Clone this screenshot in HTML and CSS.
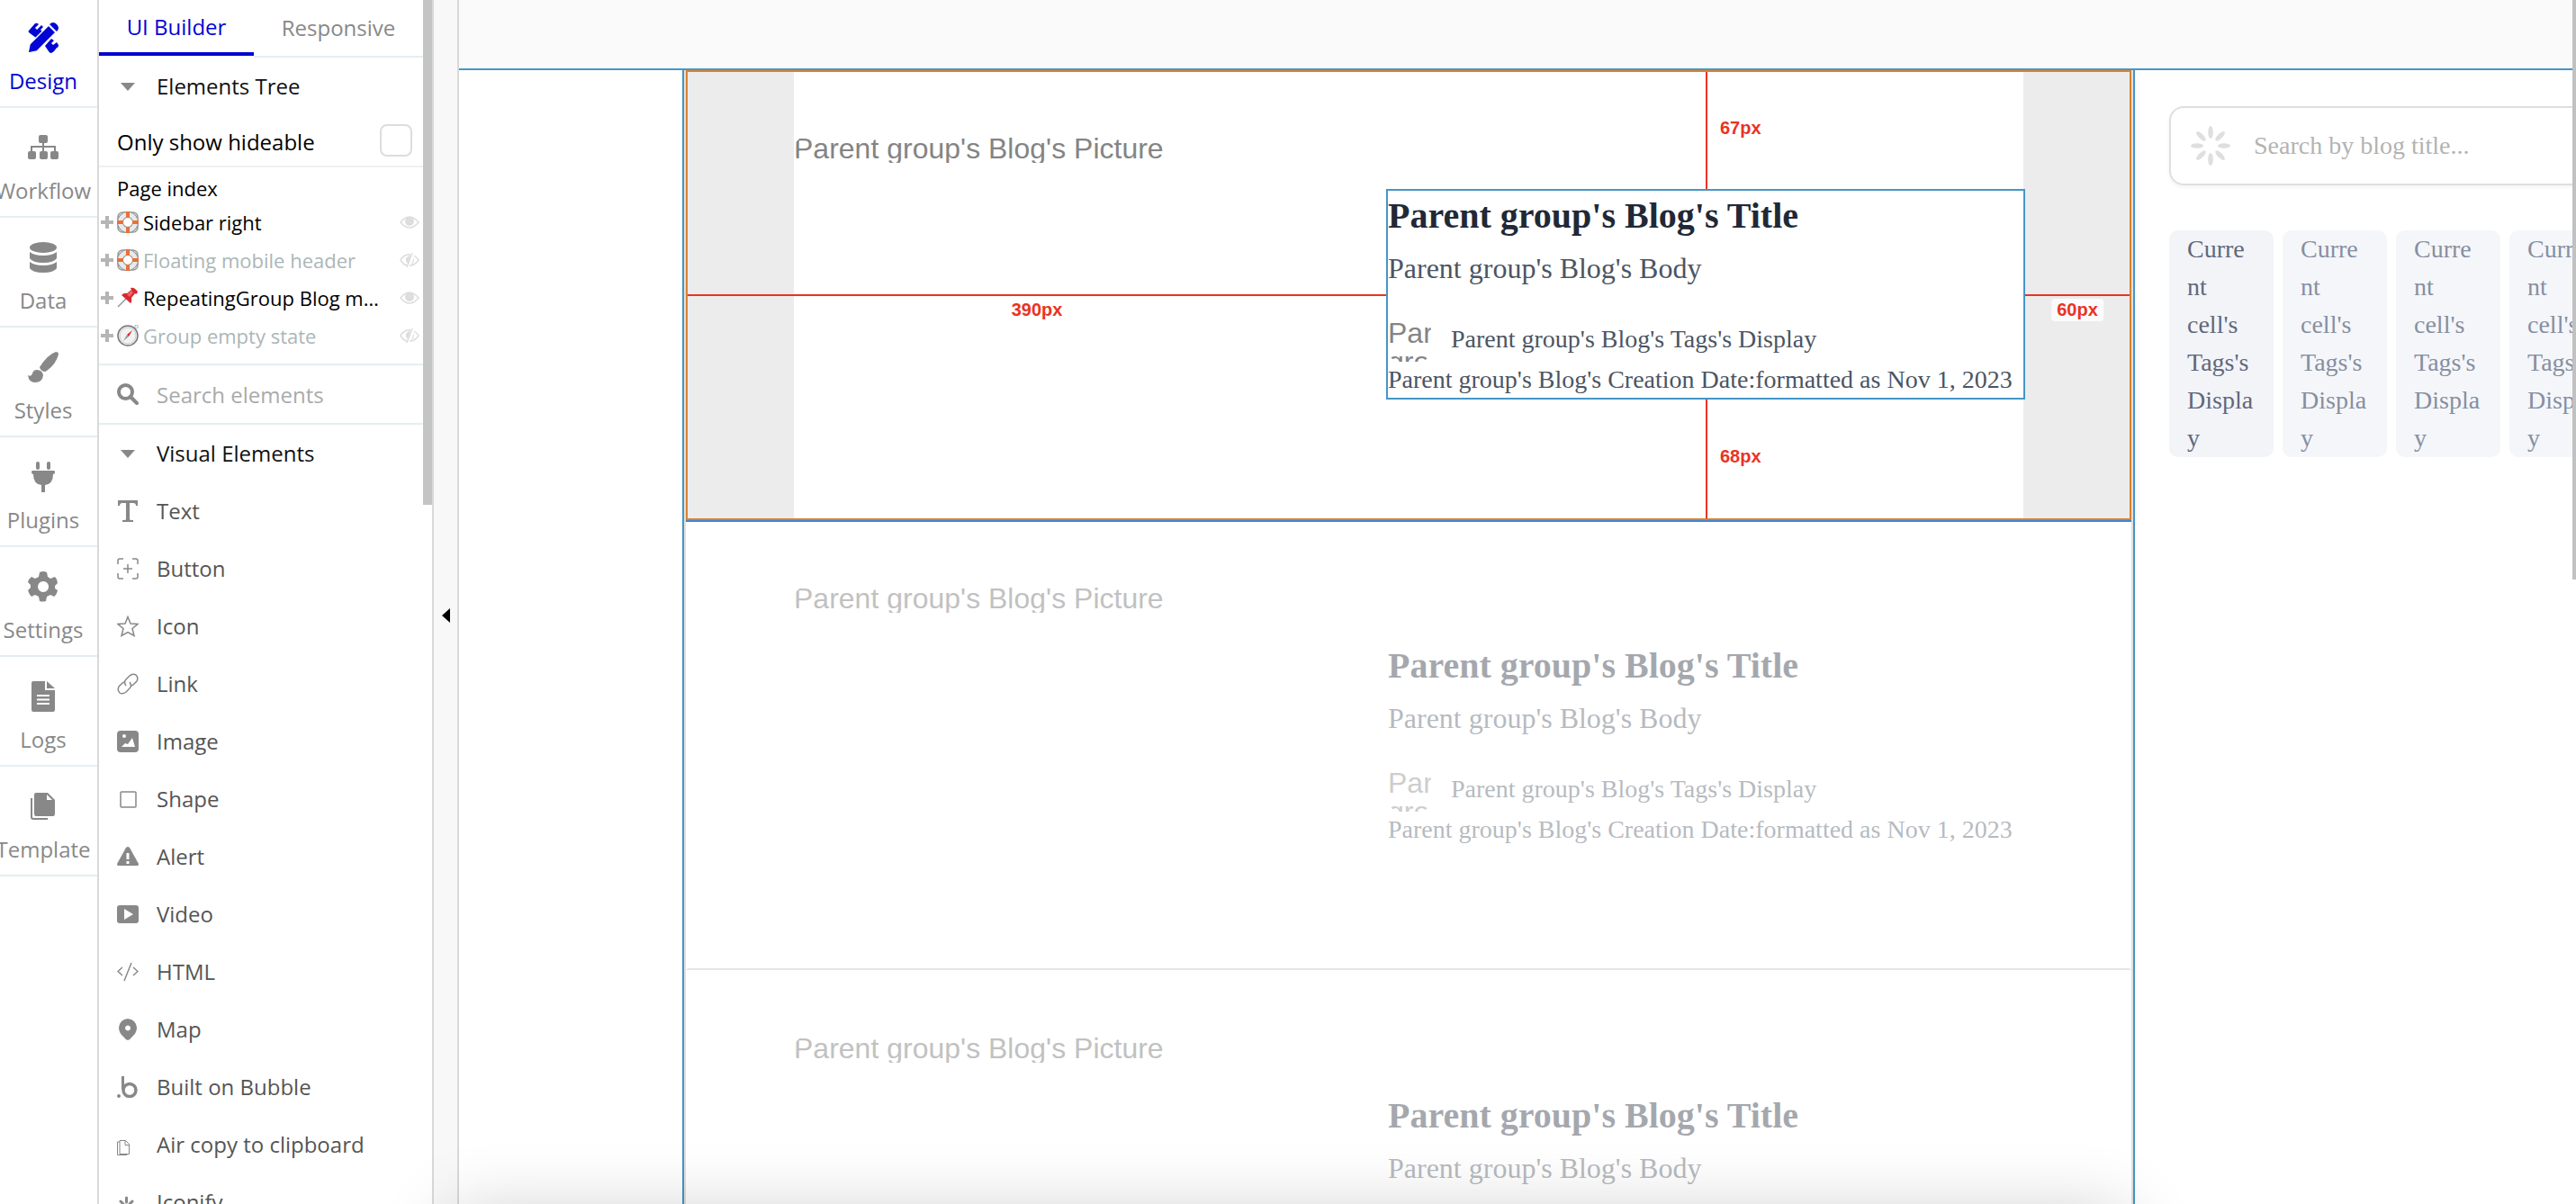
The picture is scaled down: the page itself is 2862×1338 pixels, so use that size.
FILE: index.html
```html
<!DOCTYPE html>
<html lang="en">
<head>
  <meta charset="UTF-8">
  <meta name="viewport" content="width=device-width, initial-scale=1.0">
  <link rel="stylesheet" href="styles.css">
  <title>UI Builder</title>
</head>
<body>
  <svg class="defs" aria-hidden="true">
    <symbol id="plus" viewBox="0 0 14 14"><path d="M5 0h4v5h5v4H9v5H5V9H0V5h5z"/></symbol>
    <symbol id="eye" viewBox="0 0 22 14">
      <path d="M1 7Q11-5 21 7Q11 19 1 7z" fill="none" stroke="currentColor" stroke-width="1.5"/>
      <circle cx="11" cy="6" r="5"/>
    </symbol>
    <symbol id="eye-off" viewBox="0 0 22 16">
      <path d="M12 2Q5 1 1 8q3 5 7 6M16 3q3 2 5 5q-4 6-10 6M14 0L8 16" fill="none" stroke="currentColor" stroke-width="1.5"/>
      <path d="M12 3Q6 4 7 9l2 3zM16 5l-3 8q4-3 3-8z"/>
    </symbol>
    <symbol id="buoy" viewBox="0 0 24 24">
      <rect x="1" y="1" width="22" height="22" rx="5" fill="none" stroke="#999" stroke-width="1.5"/>
      <circle cx="12" cy="12" r="8.5" fill="none" stroke="#8d8d8d" stroke-width="7"/>
      <circle cx="12" cy="12" r="8.5" fill="none" stroke="#e6eaea" stroke-width="5"/>
      <path d="M10 0h4v7h-4zM10 17h4v7h-4zM0 10h7v4H0zM17 10h7v4h-7z" fill="#e8703a"/>
    </symbol>
    <symbol id="pin" viewBox="0 0 24 24">
      <path d="M1 22L10 13" stroke="#8496a5" stroke-width="1.5"/>
      <path d="M15 1q3-1 5 1q3 2 3 4l-2 2-1-1-4 5q1 4-1 6L5 9q3-3 6-2l5-4z" fill="#d8282f"/>
      <path d="M11 8l5-4 2 2-4 5z" fill="#f0646a"/>
    </symbol>
    <symbol id="compass" viewBox="0 0 24 24">
      <circle cx="21.500" cy="2" r="1.800" fill="none" stroke="#aaa"/>
      <circle cx="12" cy="12" r="11" fill="#f1f2f2" stroke="#777" stroke-width="1.5"/>
      <circle cx="12" cy="12" r="9" fill="none" stroke="#ccc"/>
      <path d="M17 6l-4 7-2-2z" fill="#e01f26"/>
      <path d="M7 18l4-7 2 2z" fill="#999"/>
    </symbol>
  </svg>

  <nav class="rail">
    <ul class="rail-list">
      <li><a class="rail-item active" href="#design">
        <svg class="rail-icon" viewBox="0 0 34 34">
          <path d="M1 9L8 1q2-1 4 1L8 6l2 2 5-5 2 2-3 3 2 2-7 7L1 11q-1-1 0-2z"/>
          <path d="M19 26l7-8 3 2-3 3 2 2 4-3 2 3q0 3-2 3l-3 4-3 2q-2 0-3-2z"/>
          <path d="M0 34l2-10L23 3l8 8L10 32z" stroke="#fff" stroke-width="1.5"/>
          <path d="M24 2q4-4 8 0 4 4 0 8z"/>
        </svg>
        Design</a></li>
      <li><a class="rail-item" href="#workflow">
        <svg class="rail-icon" viewBox="0 0 34 34">
          <rect x="12" y="3" width="10" height="9" rx="2"/>
          <path d="M17 11v10M4 21v-5h26v5" fill="none" stroke="currentColor" stroke-width="2"/>
          <rect x="0" y="21" width="9" height="9" rx="2"/><rect x="13" y="21" width="9" height="9" rx="2"/><rect x="25" y="21" width="9" height="9" rx="2"/>
        </svg>
        Workflow</a></li>
      <li><a class="rail-item" href="#data">
        <svg class="rail-icon" viewBox="0 0 34 34">
          <ellipse cx="17" cy="6" rx="15" ry="6"/>
          <path d="M2 11q5 4 15 4t15-4v7q-3 5-15 5T2 18zM2 22q5 4 15 4t15-4v7q-3 5-15 5T2 29z"/>
        </svg>
        Data</a></li>
      <li><a class="rail-item" href="#styles">
        <svg class="rail-icon" viewBox="0 0 34 34">
          <path d="M13 17Q22 3 31 0q3 0 3 3-3 11-13 18-1 1-3 1-4-1-5-5z"/>
          <path d="M10 20q6 0 7 6-1 8-9 8-7 0-8-8 4 2 5-2 1-4 5-4z"/>
        </svg>
        Styles</a></li>
      <li><a class="rail-item" href="#plugins">
        <svg class="rail-icon" viewBox="0 0 34 34">
          <rect x="9" y="0" width="4" height="9" rx="2"/><rect x="21" y="0" width="4" height="9" rx="2"/>
          <path d="M5 10h24q1 0 1 2t-2 2q0 11-9 12v8h-4v-8Q6 25 6 14q-2 0-2-2t1-2z"/>
        </svg>
        Plugins</a></li>
      <li><a class="rail-item" href="#settings">
        <svg class="rail-icon" viewBox="0 0 34 34">
          <path fill-rule="evenodd" d="M13 1q4-2 8 0l1 5 3 2 5-2q3 3 3 7l-3 3v3l3 2q-1 5-4 7l-4-2-4 2-1 5q-4 1-7 0l-1-5-4-2-4 2q-3-3-4-7l3-3v-3l-3-3q1-4 4-6l4 2 4-2zM17 11a6 6 0 1 0 .1 0z"/>
        </svg>
        Settings</a></li>
      <li><a class="rail-item" href="#logs">
        <svg class="rail-icon" viewBox="0 0 34 34">
          <path d="M6 0h13v10h11v22q0 2-2 2H6q-2 0-2-2V2q0-2 2-2zM21 0l9 8h-9z"/>
          <path d="M10 16h14M10 20.500h14M10 25h14" stroke="#fff" stroke-width="2"/>
        </svg>
        Logs</a></li>
      <li><a class="rail-item" href="#template">
        <svg class="rail-icon" viewBox="0 0 34 34">
          <path d="M9 2h13l8 8v15q0 3-2 3H9q-2 0-2-3V4q0-2 2-2z"/>
          <path d="M21 4v6h6z" fill="#fff"/>
          <path d="M4 8v21q0 2 2 2h16" fill="none" stroke="currentColor" stroke-width="2"/>
        </svg>
        Template</a></li>
    </ul>
  </nav>

  <aside class="panel">
    <div class="tabs">
      <button class="tab active">UI Builder</button>
      <button class="tab">Responsive</button>
    </div>

    <button class="row heading"><span class="caret"></span>Elements Tree</button>
    <div class="hideable">
      <label for="hideable">Only show hideable</label>
      <input class="checkbox" type="checkbox" id="hideable">
    </div>

    <div class="tree">
      <p class="tree-page">Page index</p>
      <ul>
        <li class="tree-item"><svg class="plus"><use href="#plus"/></svg><svg class="emoji"><use href="#buoy"/></svg><span class="tree-name">Sidebar right</span><svg class="eye"><use href="#eye"/></svg></li>
        <li class="tree-item hidden"><svg class="plus"><use href="#plus"/></svg><svg class="emoji"><use href="#buoy"/></svg><span class="tree-name">Floating mobile header</span><svg class="eye"><use href="#eye-off"/></svg></li>
        <li class="tree-item"><svg class="plus"><use href="#plus"/></svg><svg class="emoji"><use href="#pin"/></svg><span class="tree-name">RepeatingGroup Blog main</span><svg class="eye"><use href="#eye"/></svg></li>
        <li class="tree-item hidden"><svg class="plus"><use href="#plus"/></svg><svg class="emoji"><use href="#compass"/></svg><span class="tree-name">Group empty state</span><svg class="eye"><use href="#eye-off"/></svg></li>
      </ul>
    </div>

    <div class="search">
      <svg class="icon" viewBox="0 0 24 24"><circle cx="9.500" cy="9.500" r="7.500" fill="none" stroke="currentColor" stroke-width="4"/><path d="M15 15l7 7" stroke="currentColor" stroke-width="4" stroke-linecap="round"/></svg>
      <input class="search-input" type="text" placeholder="Search elements" aria-label="Search elements">
    </div>

    <button class="row heading"><span class="caret"></span>Visual Elements</button>
    <button class="row"><svg class="icon" viewBox="0 0 24 24"><path d="M1 0h22v6h-2q0-3-3-3h-4v18q0 1 2 1h2v2H6v-2h2q2 0 2-1V3H6Q3 3 3 6H1z"/></svg>Text</button>
    <button class="row"><svg class="icon line" viewBox="0 0 24 24"><path d="M1 7V3q0-2 2-2h4M17 1h4q2 0 2 2v4M23 17v4q0 2-2 2h-4M7 23H3q-2 0-2-2v-4M12 7v10M7 12h10"/></svg>Button</button>
    <button class="row"><svg class="icon line" viewBox="0 0 24 24"><path d="M12 1.500l3 7.500 8 .5-6 5 2 8-7-4-7 4 2-8-6-5 8-.5z"/></svg>Icon</button>
    <button class="row"><svg class="icon line" viewBox="0 0 24 24"><path d="M10 14q-3-4 0-7l4-4q3-3 7-1 3 3 1 7l-4 4q-1 1-3 1M14 10q3 4 0 7l-4 4q-4 3-7 1-3-3-1-7l4-4q1-1 3-1"/></svg>Link</button>
    <button class="row"><svg class="icon" viewBox="0 0 24 24"><rect width="24" height="24" rx="4"/><circle cx="8" cy="6" r="2" fill="#fff"/><path d="M5 18l4-4 3 1 5-7 3 10z" fill="#fff"/></svg>Image</button>
    <button class="row"><svg class="icon line" viewBox="0 0 24 24"><rect x="4" y="4" width="17" height="17" rx="1"/></svg>Shape</button>
    <button class="row"><svg class="icon" viewBox="0 0 24 24"><path d="M12 1q1 0 2 1l10 18q0 2-1 2H1q-1 0-1-2L10 2q1-1 2-1z"/><path d="M12 8v7M12 17v3" stroke="#fff" stroke-width="3"/></svg>Alert</button>
    <button class="row"><svg class="icon" viewBox="0 0 24 24"><rect y="2" width="24" height="20" rx="3"/><path d="M8 6l10 6-10 6z" fill="#fff"/></svg>Video</button>
    <button class="row"><svg class="icon line" viewBox="0 0 24 24"><path d="M6 7l-5 4.500 5 4.500M18 7l5 4.500-5 4.500M16 2L8 22"/></svg>HTML</button>
    <button class="row"><svg class="icon" viewBox="0 0 24 24"><path fill-rule="evenodd" d="M12 0q9 1 10 10 0 6-6 11-2 3-4 3t-4-3Q2 16 2 10 3 1 12 0zM12 7.500a3 3 0 1 0 .1 0z"/></svg>Map</button>
    <button class="row"><svg class="icon" viewBox="0 0 24 24"><circle cx="14" cy="15.500" r="7" fill="none" stroke="currentColor" stroke-width="3.500"/><path d="M6.500 0v15" stroke="currentColor" stroke-width="3"/><circle cx="2" cy="22" r="2"/></svg>Built on Bubble</button>
    <button class="row"><svg class="icon thin" viewBox="0 0 24 24"><path d="M3 7.500h6.500l4 4v11H3zM9 7.500v5h4.500M3 9H.5v14.500H11v-1"/></svg>Air copy to clipboard</button>
    <button class="row"><svg class="icon" viewBox="0 0 24 24"><path d="M10.500 7v5M4 11l3 3M17 11l-3 3M3 18h4M14 18h4" stroke="currentColor" stroke-width="3" stroke-linecap="round"/></svg>Iconify</button>
    <span class="panel-scroll"></span>
  </aside>

  <button class="gutter" aria-label="Collapse panel"><span class="gutter-arrow"></span></button>

  <main class="canvas">
    <div class="page">
      <div class="page-main">
        <article class="card selected">
          <div class="stripe"></div>
          <div class="picture">Parent group's Blog's Picture</div>
          <div class="info">
            <h2>Parent group's Blog's Title</h2>
            <p class="body">Parent group's Blog's Body</p>
            <div class="meta"><span class="avatar">Par group's</span><span>Parent group's Blog's Tags's Display</span></div>
            <p class="date">Parent group's Blog's Creation Date:formatted as Nov 1, 2023</p>
          </div>
          <div class="stripe"></div>
          <div class="guide guide-left"><span class="size">390px</span></div>
          <div class="guide guide-right"><span class="size">60px</span></div>
          <div class="guide guide-top"><span class="size">67px</span></div>
          <div class="guide guide-bottom"><span class="size">68px</span></div>
        </article>
        <article class="card">
          <div class="stripe"></div>
          <div class="picture">Parent group's Blog's Picture</div>
          <div class="info">
            <h2>Parent group's Blog's Title</h2>
            <p class="body">Parent group's Blog's Body</p>
            <div class="meta"><span class="avatar">Par group's</span><span>Parent group's Blog's Tags's Display</span></div>
            <p class="date">Parent group's Blog's Creation Date:formatted as Nov 1, 2023</p>
          </div>
          <div class="stripe"></div>
        </article>
        <article class="card">
          <div class="stripe"></div>
          <div class="picture">Parent group's Blog's Picture</div>
          <div class="info">
            <h2>Parent group's Blog's Title</h2>
            <p class="body">Parent group's Blog's Body</p>
          </div>
          <div class="stripe"></div>
        </article>
      </div>

      <div class="page-side">
        <div class="blog-search">
          <svg class="spinner" viewBox="0 0 44 44">
            <g id="petals"><ellipse cx="22" cy="7" rx="2.800" ry="7"/><ellipse cx="22" cy="37" rx="2.800" ry="7"/><ellipse cx="7" cy="22" rx="7" ry="2.800"/><ellipse cx="37" cy="22" rx="7" ry="2.800"/></g>
            <use href="#petals" transform="rotate(45 22 22)"/>
          </svg>
          <input class="blog-input" type="text" placeholder="Search by blog title..." aria-label="Search by blog title">
        </div>
        <ul class="tags">
          <li class="tag first">Current cell's Tags's Display</li>
          <li class="tag">Current cell's Tags's Display</li>
          <li class="tag">Current cell's Tags's Display</li>
          <li class="tag">Current cell's Tags's Display</li>
        </ul>
      </div>
    </div>
    <span class="canvas-scroll"></span>
  </main>
  <div class="bottom-shadow"></div>
</body>
</html>
```

FILE: styles.css
```css
*, *::before, *::after {
  margin: 0;
  padding: 0;
  box-sizing: border-box;
}

body {
  display: flex;
  position: relative;
  height: 100vh;
  overflow: hidden;
  background: #fff;
  font-family: "Open Sans", sans-serif;
  font-size: 24px;
  line-height: 34px;
}

button, input {
  border: 0;
  background: none;
  font: inherit;
}

ul {
  list-style: none;
}

svg {
  flex: none;
  fill: currentColor;
}

.defs {
  position: absolute;
  width: 0;
  height: 0;
}

/* left rail */

.rail {
  flex: none;
  width: 110px;
  border-right: 2px solid #d9d9d9;
  overflow: hidden;
}

.rail-list {
  width: 120px;
  margin: -2px 0 0 -12px;
}

.rail-item {
  display: flex;
  flex-direction: column;
  align-items: center;
  gap: 14px;
  height: 122px;
  padding-top: 27px;
  border-bottom: 2px solid #e4eff1;
  color: #888;
  text-decoration: none;
}

.rail-item.active {
  color: #0205d3;
}

.rail-icon {
  width: 34px;
  height: 34px;
}

/* panel */

.panel {
  position: relative;
  flex: none;
  display: flex;
  flex-direction: column;
  width: 372px;
  padding-right: 10px;
  border-right: 2px solid #d9d9d9;
  overflow: hidden;
}

.panel > * {
  flex: none;
}

.tabs {
  display: flex;
  align-items: flex-start;
  height: 64px;
}

.tab {
  flex: 1;
  height: 64px;
  border-bottom: 2px solid #e4eff1;
  color: #888;
}

.tab.active {
  flex: none;
  width: 172px;
  height: 62px;
  padding-top: 2px;
  border-bottom: 4px solid #0205d3;
  color: #0205d3;
}

.row {
  display: flex;
  align-items: center;
  gap: 20px;
  height: 64px;
  padding-left: 20px;
  color: #555;
  text-align: left;
}

.heading {
  color: #111;
}

.icon {
  width: 24px;
  height: 24px;
  color: #888;
}

.line, .thin {
  fill: none;
  stroke: currentColor;
  stroke-width: 1.5;
}

.thin {
  stroke-width: 1;
}

.caret {
  margin: 0 4px;
  border: 8px solid transparent;
  border-top: 9px solid #888;
  border-bottom: 0;
}

.hideable {
  display: flex;
  align-items: center;
  justify-content: space-between;
  height: 58px;
  padding: 0 12px 0 20px;
  border-bottom: 2px solid #f0f0f0;
  color: #000;
}

.hideable label {
  padding-top: 4px;
}

.checkbox {
  appearance: none;
  width: 36px;
  height: 36px;
  border: 2px solid #ddd;
  border-radius: 8px;
}

.tree {
  padding: 6px 0 10px;
  border-bottom: 2px solid #e4eff1;
  font-size: 22px;
}

.tree-page {
  padding-left: 20px;
}

.tree-item {
  display: flex;
  align-items: center;
  height: 42px;
  padding: 0 4px 0 2px;
}

.tree-item.hidden .tree-name {
  color: #abb6b8;
}

.tree-name {
  flex: 1;
  margin: 0 22px 0 5px;
  overflow: hidden;
  text-overflow: ellipsis;
  white-space: nowrap;
}

.plus {
  width: 14px;
  height: 14px;
  margin-right: 4px;
  color: #b5b5b5;
}

.emoji {
  width: 24px;
  height: 24px;
}

.eye {
  width: 22px;
  height: 16px;
  color: #ddd;
}

.search {
  display: flex;
  align-items: center;
  gap: 20px;
  height: 66px;
  padding-left: 20px;
  border-bottom: 2px solid #e4eff1;
}

.search-input {
  flex: 1;
  min-width: 0;
  height: 64px;
}

.search-input::placeholder {
  color: #aaa;
}

.panel-scroll {
  position: absolute;
  top: 0;
  right: 0;
  width: 10px;
  height: 561px;
  background: #c4c4c4;
}

.gutter {
  flex: none;
  display: flex;
  align-items: center;
  width: 28px;
  padding: 30px 0 0 9px;
  border-right: 2px solid #d9d9d9;
  background: #f8f8f8;
}

.gutter-arrow {
  border: 8px solid transparent;
  border-right: 9px solid #000;
  border-left: 0;
}

/* canvas */

.canvas {
  position: relative;
  flex: 1;
  min-width: 0;
  padding: 76px 4px 0 0;
  background: linear-gradient(#fafafa 76px, #fff 76px);
  overflow: hidden;
}

.page {
  display: grid;
  grid-template-columns: 1fr 486px;
  padding-left: 248px;
  border-top: 2px solid #4596c6;
  font-family: "Liberation Serif", serif;
  font-size: 28px;
  line-height: 42px;
  color: #4b5563;
}

.page-main {
  border: solid #4596c6;
  border-width: 0 2px;
  box-shadow: inset 2px 0 #dfdfdf, inset -2px 0 #dfdfdf;
  padding: 0 2px;
}

.card {
  position: relative;
  display: grid;
  grid-template-columns: 118px 1fr 706px 118px;
  height: 500px;
  border: 2px solid transparent;
  border-bottom-color: #e5e5e5;
}

.card.selected {
  border-color: #d9822f;
  box-shadow: 0 2px #3b86d8;
}

.selected .stripe {
  background: #ececec;
}

.picture {
  justify-self: start;
  height: 29px;
  margin-top: 72px;
  border-radius: 14px;
  color: #848484;
  font-family: "Liberation Sans", sans-serif;
  font-size: 32px;
  line-height: 26px;
  overflow: hidden;
}

.info {
  position: relative;
  align-self: start;
  margin-top: 132px;
}

.selected .info {
  z-index: 1;
  outline: 2px solid #4596c6;
}

.card:not(.selected) .picture {
  opacity: .5;
}

.card:not(.selected) .info {
  opacity: .4;
}

.info h2 {
  color: #1f2937;
  font-size: 40px;
  line-height: 56px;
}

.body {
  padding: 6px 0 32px;
  font-size: 32px;
  line-height: 48px;
}

.meta {
  display: flex;
  gap: 22px;
  height: 48px;
  line-height: 46px;
}

.avatar {
  width: 48px;
  height: 48px;
  border-radius: 14px;
  color: #848484;
  font-family: "Liberation Sans", sans-serif;
  font-size: 32px;
  line-height: 32px;
  overflow: hidden;
}

.date {
  line-height: 40px;
}

/* distance guides drawn over the selected card */

.guide {
  position: absolute;
  background: #ea3323;
}

.guide-left, .guide-right {
  top: 247px;
  height: 2px;
}

.guide-left {
  left: 0;
  right: 826px;
}

.guide-right {
  right: 0;
  width: 116px;
}

.guide-top, .guide-bottom {
  right: 469px;
  width: 2px;
}

.guide-top {
  top: 0;
  height: 130px;
}

.guide-bottom {
  top: 364px;
  bottom: 0;
}

.size {
  position: absolute;
  padding: 0 6px;
  border-radius: 4px;
  background: #fffc;
  color: #ea3323;
  font: bold 20px/25px "Liberation Sans", sans-serif;
}

.guide-left .size, .guide-right .size {
  top: 5px;
  left: 50%;
  transform: translateX(-50%);
}

.guide-top .size, .guide-bottom .size {
  top: calc(50% - 3px);
  left: 10px;
  transform: translateY(-50%);
}

/* right column of the edited page */

.page-side {
  padding: 40px 0 0 38px;
  overflow: hidden;
}

.blog-search {
  display: flex;
  align-items: center;
  gap: 26px;
  width: 600px;
  height: 88px;
  margin-bottom: 50px;
  padding-left: 22px;
  border: 2px solid #dfdfdf;
  border-radius: 16px;
  box-shadow: 0 2px 4px #0000000d;
}

.spinner {
  width: 44px;
  height: 44px;
  color: #dfdfdf;
}

.blog-input {
  flex: 1;
  min-width: 0;
}

.blog-input::placeholder {
  color: #b3b3b3;
}

.tags {
  display: flex;
  gap: 10px;
}

.tag {
  flex: none;
  width: 116px;
  padding: 0 20px;
  border-radius: 10px;
  background: #f5f6fa;
  color: #868fa0;
  overflow-wrap: anywhere;
}

.tag.first {
  background: #f3f4f8;
  color: #5f687b;
}

.canvas-scroll {
  position: absolute;
  top: 0;
  right: 0;
  width: 4px;
  height: 644px;
  background: #c1c1c1;
}

.bottom-shadow {
  position: absolute;
  top: 100%;
  left: 500px;
  right: 500px;
  height: 100px;
  margin-top: 10px;
  box-shadow: 0 0 80px #0003;
  pointer-events: none;
}
```
